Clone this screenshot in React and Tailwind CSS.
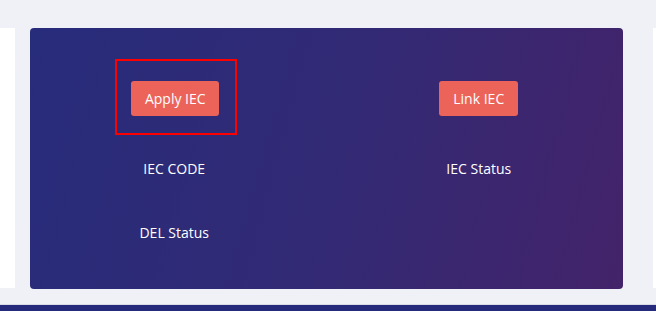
export default function App() {
  return (
    <div className="w-[656px] h-[311px] bg-[#f0f1f6] overflow-hidden flex flex-col" style={{ fontFamily: '"Open Sans", "Noto Sans", sans-serif' }}>
      <div className="flex-1 flex items-start pt-[28px]">
        {/* left panel edge */}
        <div className="w-[15px] h-[260px] bg-white shrink-0" />
        <div className="ml-[15px] w-[593px] h-[261px] rounded-[4px] bg-[linear-gradient(105deg,#272c7b_0%,#322a75_50%,#43236a_100%)] shrink-0">
          <div className="-mx-2 grid grid-cols-2 pt-[31px]">
            <div className="flex flex-col items-center">
              <div className="ml-[4px] border-2 border-[#ff0000] w-[122px] h-[76px] pl-[14px] pt-[20px]">
                <button className="w-[88px] h-[35px] rounded-[3px] bg-[#ec6459] text-white text-[14px]">
                  Apply IEC
                </button>
              </div>
            </div>
            <div className="flex flex-col items-center pt-[22px]">
              <button className="w-[79px] h-[35px] rounded-[3px] bg-[#ec6459] text-white text-[14px]">
                Link IEC
              </button>
            </div>
            <div className="text-center text-white text-[14px] leading-[20px] pt-[24px]">IEC CODE</div>
            <div className="text-center text-white text-[14px] leading-[20px] pt-[24px]">IEC Status</div>
            <div className="text-center text-white text-[14px] leading-[20px] pt-[44px]">DEL Status</div>
          </div>
        </div>
        <div className="ml-[30px] w-[10px] h-[260px] bg-white shrink-0" />
      </div>
      <div className="h-px bg-[#d9dbe6]" />
      <div className="h-[6px] bg-[#262a7b]" />
    </div>
  );
}
